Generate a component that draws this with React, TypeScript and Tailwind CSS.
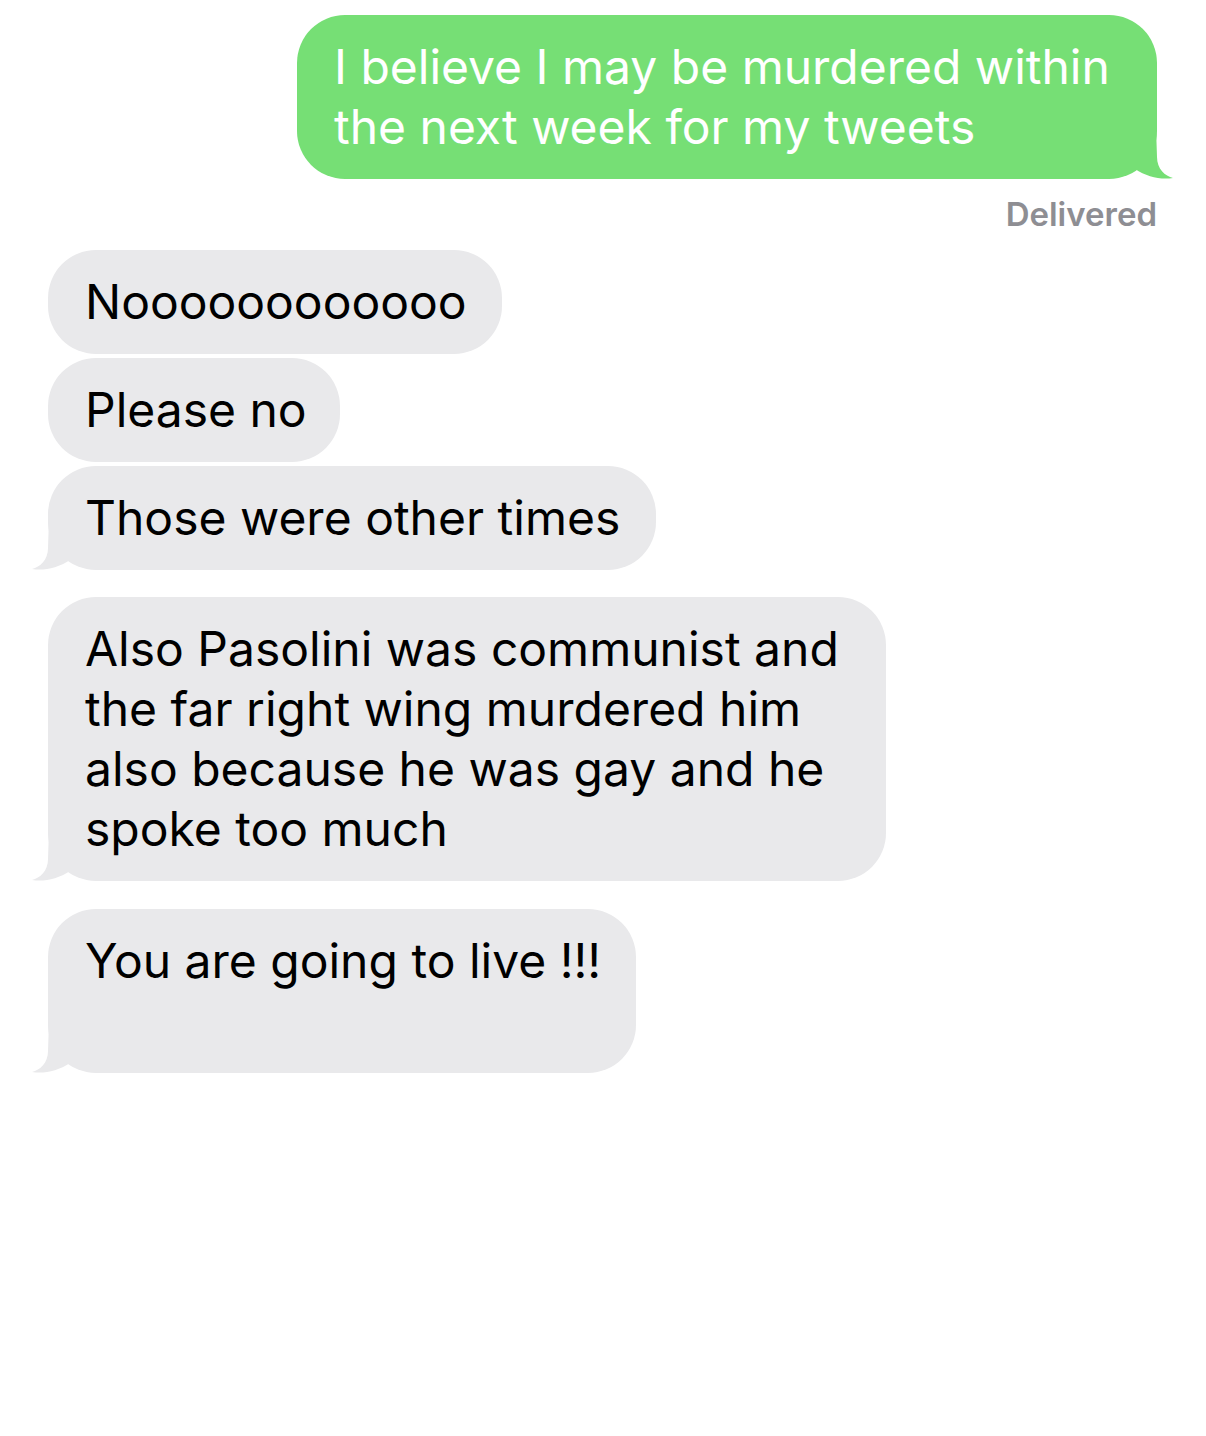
import React from 'react';

const font = { fontFamily: 'Inter, "Noto Sans", sans-serif' };

function Tail({ side, color }: { side: 'left' | 'right'; color: string }) {
  return (
    <svg
      width="40"
      height="54"
      viewBox="0 0 40 54"
      className={
        side === 'left'
          ? 'absolute left-[-16px] bottom-[-2px]'
          : 'absolute right-[-16px] bottom-[-2px] -scale-x-100'
      }
    >
      <path d="M17 0 L16 30 C16 42 8 49 0 51 C12 53 26 50 38 42 L38 0 Z" fill={color} />
    </svg>
  );
}

function Received({
  lines,
  width,
  tail,
  extraLine,
}: {
  lines: string[];
  width: number;
  tail?: boolean;
  extraLine?: boolean;
}) {
  return (
    <div
      className="relative rounded-[48px] bg-[#e9e9eb] pl-[37px] pr-[20px] py-[22px] text-black text-[48px] leading-[60px] whitespace-nowrap"
      style={{ width }}
    >
      {lines.map((l, i) => (
        <div key={i}>{l}</div>
      ))}
      {extraLine && <div>&nbsp;</div>}
      {tail && <Tail side="left" color="#e9e9eb" />}
    </div>
  );
}

export default function App() {
  return (
    <div className="w-[1206px] h-[1436px] bg-white overflow-hidden" style={font}>
      <div className="flex flex-col items-end pt-[15px] pr-[49px]">
        <div className="relative w-[860px] rounded-[48px] bg-[#76df75] pl-[37px] py-[22px] text-white text-[48px] leading-[60px] whitespace-nowrap">
          <div>I believe I may be murdered within</div>
          <div>the next week for my tweets</div>
          <Tail side="right" color="#76df75" />
        </div>
        <div className="mt-[17px] text-[33px] leading-[36px] font-semibold text-[#8e8e93]">Delivered</div>
      </div>

      <div className="flex flex-col items-start pl-[48px] mt-[18px]">
        <div className="flex flex-col items-start gap-[4px]">
          <Received lines={['Noooooooooooo']} width={454} />
          <Received lines={['Please no']} width={292} />
          <Received lines={['Those were other times']} width={608} tail />
        </div>
        <div className="mt-[27px]">
          <Received
            lines={[
              'Also Pasolini was communist and',
              'the far right wing murdered him',
              'also because he was gay and he',
              'spoke too much',
            ]}
            width={838}
            tail
          />
        </div>
        <div className="mt-[28px]">
          <Received lines={['You are going to live !!!']} width={588} tail extraLine />
        </div>
      </div>
    </div>
  );
}
